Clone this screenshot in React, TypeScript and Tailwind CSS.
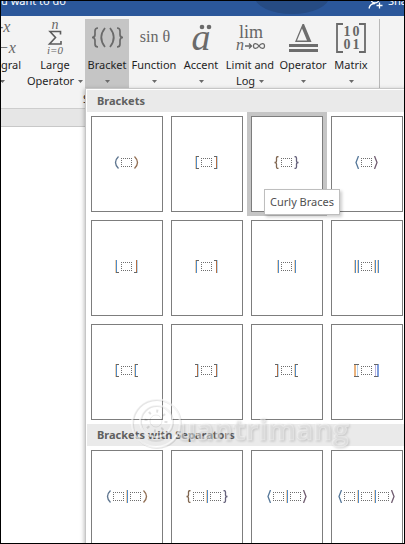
import type { ReactNode } from 'react'
import clsx from 'clsx'

// ── Ribbon icons ──────────────────────────────────────────────────────────────

const SERIF = 'Liberation Serif, serif'

const integralIcon = (
  <svg width="24" height="36" fill="#666" fontFamily={SERIF} fontStyle="italic">
    <text x="-3" y="12" fontSize="16">-x</text>
    <text x="-3" y="33" fontSize="16">−x</text>
  </svg>
)

const sumIcon = (
  <svg width="44" height="36" fill="#666" fontFamily={SERIF} textAnchor="middle">
    <text x="22" y="9" fontSize="14" fontStyle="italic">n</text>
    <path d="M27.500 14.500V11.500H17L22.500 17.500L16.500 24H28V21" fill="none" stroke="#5c5c5c" strokeWidth="1.6" />
    <text x="22" y="34" fontSize="11" fontStyle="italic">i=0</text>
  </svg>
)

const bracketIcon = (
  <svg width="44" height="36" fill="none" stroke="#6a6a6a" strokeWidth="1.7">
    <path d="M13 8Q10 8 10 11V14.500Q10 17.500 7 17.500Q10 17.500 10 20.500V24Q10 27 13 27" />
    <path d="M20 8Q12.500 17.500 20 27M25 8Q32.500 17.500 25 27" />
    <path d="M32 8Q35 8 35 11V14.500Q35 17.500 38 17.500Q35 17.500 35 20.500V24Q35 27 32 27" />
  </svg>
)

const functionIcon = (
  <svg width="44" height="36" fill="#666" fontFamily={SERIF} textAnchor="middle">
    <text x="23" y="22" fontSize="16">sin θ</text>
  </svg>
)

const accentIcon = (
  <svg width="44" height="36" fill="#6a6a6a" fontFamily={SERIF} textAnchor="middle">
    <text x="22" y="30" fontSize="38" fontStyle="italic">a</text>
    <circle cx="23" cy="7" r="2.3" />
    <circle cx="30" cy="7" r="2.3" />
  </svg>
)

const limitIcon = (
  <svg width="44" height="36" fill="#666" fontFamily={SERIF} textAnchor="middle">
    <text x="23" y="18" fontSize="18">lim</text>
    <text x="12" y="30" fontSize="16" fontStyle="italic">n</text>
    <path d="M17 26H23.500M21 23.500L23.500 26L21 28.500" fill="none" stroke="#666" strokeWidth="1.3" />
    <path d="M31 26C29 23 25.500 22.500 25.500 26S29 29 31 26S36.500 22.500 36.500 26S33 29 31 26Z" fill="none" stroke="#666" strokeWidth="1.300" />
  </svg>
)

const operatorIcon = (
  <svg width="44" height="36" fill="#6d6d6d">
    <path fillRule="evenodd" d="M21.500 4H23L30.500 22H14ZM21 8.500L16 20.500H26Z" />
    <path d="M8 24H37V27H8ZM8 29H37V32H8Z" />
  </svg>
)

const matrixIcon = (
  <svg width="44" height="36" fill="#666" fontFamily={SERIF} fontWeight="bold" textAnchor="middle">
    <path d="M14 4H8V32H14M30 4H36V32H30" fill="none" stroke="#6a6a6a" strokeWidth="1.8" />
    <text x="18" y="16" fontSize="14">1</text>
    <text x="27" y="16" fontSize="14">0</text>
    <text x="18" y="29" fontSize="14">0</text>
    <text x="27" y="29" fontSize="14">1</text>
  </svg>
)

function Caret() {
  return (
    <svg width="5" height="3" viewBox="0 0 5 3" className="shrink-0" aria-hidden>
      <path d="M0 0H5L2.500 3Z" fill="#6a6a6a" />
    </svg>
  )
}

// ── Ribbon button ─────────────────────────────────────────────────────────────

type RibbonButtonProps = {
  icon: ReactNode
  lines: string[]
  width: string
  active?: boolean
}

function RibbonButton({ icon, lines, width, active }: RibbonButtonProps) {
  return (
    <button
      type="button"
      className={clsx(
        'flex h-[70px] shrink-0 flex-col items-center whitespace-nowrap text-[11px] text-[#1f1f1f]',
        width,
        active ? 'bg-[#c5c5c5]' : 'hover:bg-[#dcdcdc]',
      )}
    >
      <span className="flex h-[38px] items-start pt-px" aria-hidden>{icon}</span>
      <span className="leading-4">{lines[0]}</span>
      <span className="flex h-4 items-center gap-1 leading-4">
        {lines[1]}
        <Caret />
      </span>
    </button>
  )
}

// ── Gallery symbols ───────────────────────────────────────────────────────────

// Stems carry a warm and a cool fringe, like ClearType does
const WARM = '#f2cfa8'
const COOL = '#4f8ccb'

function Stem({ x, flip }: { x: number; flip?: boolean }) {
  return (
    <>
      <path d={`M${x + 0.5} 0V13`} stroke={flip ? '#b86f42' : WARM} />
      <path d={`M${x + 1.5} 0V13`} stroke={flip ? '#b4d8f4' : COOL} />
    </>
  )
}

type Fence = { w: number; draw: ReactNode }

const FENCES: Record<string, Fence> = {
  '(': { w: 5, draw: <path d="M4.500 0.500Q-1.500 6.500 4.500 12.500" stroke="#5f7690" strokeWidth="1.300" /> },
  ')': { w: 5, draw: <path d="M0.500 0.500Q6.500 6.500 0.500 12.500" stroke="#937055" strokeWidth="1.300" /> },
  '{': { w: 5, draw: <path d="M4.500 0.500Q2.500 0.500 2.500 2V5Q2.500 6.500 0.500 6.500Q2.500 6.500 2.500 8V11Q2.500 12.500 4.500 12.500" stroke="#806650" strokeWidth="1.300" /> },
  '}': { w: 5, draw: <path d="M0.500 0.500Q2.500 0.500 2.500 2V5Q2.500 6.500 4.500 6.500Q2.500 6.500 2.500 8V11Q2.500 12.500 0.500 12.500" stroke="#66627c" strokeWidth="1.300" /> },
  '<': { w: 4, draw: <path d="M3.500 0L1 6.500L3.500 13" stroke="#557799" strokeWidth="1.300" /> },
  '>': { w: 4, draw: <path d="M0.500 0L3 6.500L0.500 13" stroke="#705c70" strokeWidth="1.300" /> },
  '[': { w: 4, draw: <><Stem x={0} /><path d="M1 0.500H4M1 12.500H4" stroke="#666" /></> },
  ']': { w: 4, draw: <><Stem x={2} flip /><path d="M0 0.500H3M0 12.500H3" stroke="#666" /></> },
  '⌊': { w: 4, draw: <><Stem x={0} /><path d="M1 12.500H4" stroke="#666" /></> },
  '⌋': { w: 4, draw: <><Stem x={2} flip /><path d="M0 12.500H3" stroke="#666" /></> },
  '⌈': { w: 4, draw: <><Stem x={0} /><path d="M1 0.500H4" stroke="#666" /></> },
  '⌉': { w: 4, draw: <><Stem x={2} flip /><path d="M0 0.500H3" stroke="#666" /></> },
  '|': { w: 2, draw: <Stem x={0} /> },
  '‖': { w: 5, draw: <><Stem x={0} /><Stem x={3} /></> },
  '⟦': { w: 5, draw: <><path d="M0.500 0V13M1.500 0V13" stroke="#eab27c" /><path d="M3.500 0V13" stroke="#b5d2ee" /><path d="M0 0.500H5M0 12.500H5" stroke="#666" /></> },
  '⟧': { w: 5, draw: <><path d="M1.500 0V13" stroke="#b9b2e2" /><path d="M3.500 0V13M4.500 0V13" stroke="#7f9fdd" /><path d="M0 0.500H4M0 12.500H4" stroke="#666" /></> },
}

// "o" stands for an empty placeholder, anything else is a fence
function Equation({ pattern }: { pattern: string }) {
  return (
    <span className="flex items-center justify-center gap-0.5" aria-hidden>
      {[...pattern].map((token, i) => {
        if (token === 'o') {
          return (
            <svg key={i} width="11" height="9" fill="none" stroke="#6e6e6e" strokeDasharray="1 1">
              <path d="M0 0.500H11M0 8.500H11M0.500 2V8M10.500 2V8" />
            </svg>
          )
        }
        const fence = FENCES[token]
        return (
          <svg key={i} width={fence.w} height="13" fill="none">
            {fence.draw}
          </svg>
        )
      })}
    </span>
  )
}

// ── Gallery ───────────────────────────────────────────────────────────────────

type GalleryItem = { name: string; pattern: string; selected?: boolean }

const BRACKETS: GalleryItem[] = [
  { name: 'Parentheses', pattern: '(o)' },
  { name: 'Square Brackets', pattern: '[o]' },
  { name: 'Curly Braces', pattern: '{o}', selected: true },
  { name: 'Angle Brackets', pattern: '<o>' },
  { name: 'Floor', pattern: '⌊o⌋' },
  { name: 'Ceiling', pattern: '⌈o⌉' },
  { name: 'Bar', pattern: '|o|' },
  { name: 'Double Bar', pattern: '‖o‖' },
  { name: 'Left Brackets', pattern: '[o[' },
  { name: 'Right Brackets', pattern: ']o]' },
  { name: 'Reversed Brackets', pattern: ']o[' },
  { name: 'Double Square Brackets', pattern: '⟦o⟧' },
]

const SEPARATED: GalleryItem[] = [
  { name: 'Parentheses with Separator', pattern: '(o|o)' },
  { name: 'Curly Braces with Separator', pattern: '{o|o}' },
  { name: 'Angle Brackets with Separator', pattern: '<o|o>' },
  { name: 'Angle Brackets with Two Separators', pattern: '<o|o|o>' },
]

function GallerySection({ title, items }: { title: string; items: GalleryItem[] }) {
  return (
    <section>
      <h2 className="h-[22px] bg-[#eaeaea] px-2.5 text-[11px] leading-[22px] font-bold text-[#606060]">
        {title}
      </h2>
      <div className="grid grid-cols-4">
        {items.map(({ name, pattern, selected }) => (
          <div key={name} className={clsx('relative p-1', selected && 'bg-[#c5c5c5]')}>
            <button
              type="button"
              aria-label={name}
              className="flex h-24 w-full items-center justify-center border border-[#7d7d7d] bg-white pr-px pb-[3px]"
            >
              <Equation pattern={pattern} />
            </button>
            {selected && (
              <div
                role="tooltip"
                className="absolute top-[77px] left-[17px] z-10 border border-[#bebebe] bg-white px-[5px] text-[11px] leading-6 whitespace-nowrap text-[#505050] shadow-[2px_2px_3px_rgba(0,0,0,0.2)]"
              >
                {name}
              </div>
            )}
          </div>
        ))}
      </div>
    </section>
  )
}

function Watermark() {
  return (
    <svg
      width="230"
      height="64"
      className="pointer-events-none absolute top-[304px] left-[43px]"
      fontFamily="Open Sans, sans-serif"
      fontWeight="700"
      aria-hidden
    >
      <g fill="none" strokeWidth="2">
        <g stroke="#000" strokeOpacity="0.1" transform="translate(1 1)">
          <circle cx="27" cy="30" r="24" />
          <circle cx="27" cy="28" r="16" />
        </g>
        <g stroke="#fff" strokeOpacity="0.6">
          <circle cx="27" cy="30" r="24" />
          <circle cx="27" cy="28" r="16" />
        </g>
        <circle cx="27" cy="28" r="10" stroke="#000" strokeOpacity="0.12" strokeWidth="3" strokeDasharray="2 5.850" />
        <circle cx="27" cy="28" r="6" stroke="#000" strokeOpacity="0.08" strokeWidth="1" />
        <path d="M19 46Q27 50 35 46" stroke="#000" strokeOpacity="0.08" />
      </g>
      <text
        x="48"
        y="47"
        fontSize="29"
        fill="#f0f0f0"
        fillOpacity="0.5"
        stroke="#fff"
        strokeOpacity="0.3"
        className="drop-shadow-[1px_1px_1px_rgba(0,0,0,0.3)]"
      >
        uantrimang
      </text>
    </svg>
  )
}

function BracketMenu() {
  return (
    <div className="absolute top-[69px] left-0 z-10 w-[324px] border border-[#c6c6c6] bg-white p-px shadow-[-1px_1px_4px_rgba(0,0,0,0.25)]">
      <GallerySection title="Brackets" items={BRACKETS} />
      <GallerySection title="Brackets with Separators" items={SEPARATED} />
      <Watermark />
    </div>
  )
}

// ── Page ──────────────────────────────────────────────────────────────────────

export default function App() {
  return (
    <div className="h-screen w-full overflow-hidden border border-black bg-white font-['Noto_Sans',sans-serif]">
      {/* Title bar */}
      <header className="relative flex h-[15px] items-start justify-between overflow-hidden bg-[#2b579a] text-[11px] leading-4 text-white">
        <svg width="80" height="15" className="absolute top-0 left-[254px]" aria-hidden>
          <ellipse cx="37" cy="-4" rx="37" ry="17" fill="#264b83" />
        </svg>
        <span className="-mt-2 whitespace-nowrap">u want to do</span>
        <button type="button" className="relative -mt-2 flex h-4 w-9 gap-1 whitespace-nowrap">
          <svg width="16" height="16" fill="none" stroke="#fff" strokeWidth="1.300" className="shrink-0" aria-hidden>
            <circle cx="7" cy="6" r="4" />
            <path d="M1 15.500Q2 10.500 7 10.500M11.500 9.500V15.500M8.500 12.500H14.500" />
          </svg>
          Share
        </button>
      </header>

      {/* Ribbon */}
      <div className="border-b border-[#cdcdcd] bg-[#f3f3f3] pt-[3px]">
        <div className="flex">
          <div className="flex w-6 shrink-0 justify-end overflow-hidden">
            <button type="button" className="flex h-[70px] shrink-0 flex-col items-end text-[11px] text-[#1f1f1f]">
              <span className="flex h-[38px] items-start pt-px" aria-hidden>{integralIcon}</span>
              <span className="pr-1 leading-4">Integral</span>
              <span className="flex h-4 w-full items-center justify-center">
                <Caret />
              </span>
            </button>
          </div>
          <RibbonButton icon={sumIcon} lines={['Large', 'Operator']} width="w-[60px]" />
          <div className="relative shrink-0">
            <RibbonButton icon={bracketIcon} lines={['Bracket']} width="w-11" active />
            <BracketMenu />
          </div>
          <RibbonButton icon={functionIcon} lines={['Function']} width="w-[50px]" />
          <RibbonButton icon={accentIcon} lines={['Accent']} width="w-11" />
          <RibbonButton icon={limitIcon} lines={['Limit and', 'Log']} width="w-[54px]" />
          <RibbonButton icon={operatorIcon} lines={['Operator']} width="w-[52px]" />
          <RibbonButton icon={matrixIcon} lines={['Matrix']} width="w-11" />
          <div className="ml-1.5 w-px bg-[#b8b8b8]" />
        </div>
        <div className="h-[19px] pl-[82px] text-[11px] leading-5 text-[#1f1f1f]">Symbols</div>
      </div>

      {/* Document area */}
      <main>
        <div className="h-[18px] border-b border-[#c8c8c8] bg-[#e6e6e6]" />
      </main>
    </div>
  )
}
